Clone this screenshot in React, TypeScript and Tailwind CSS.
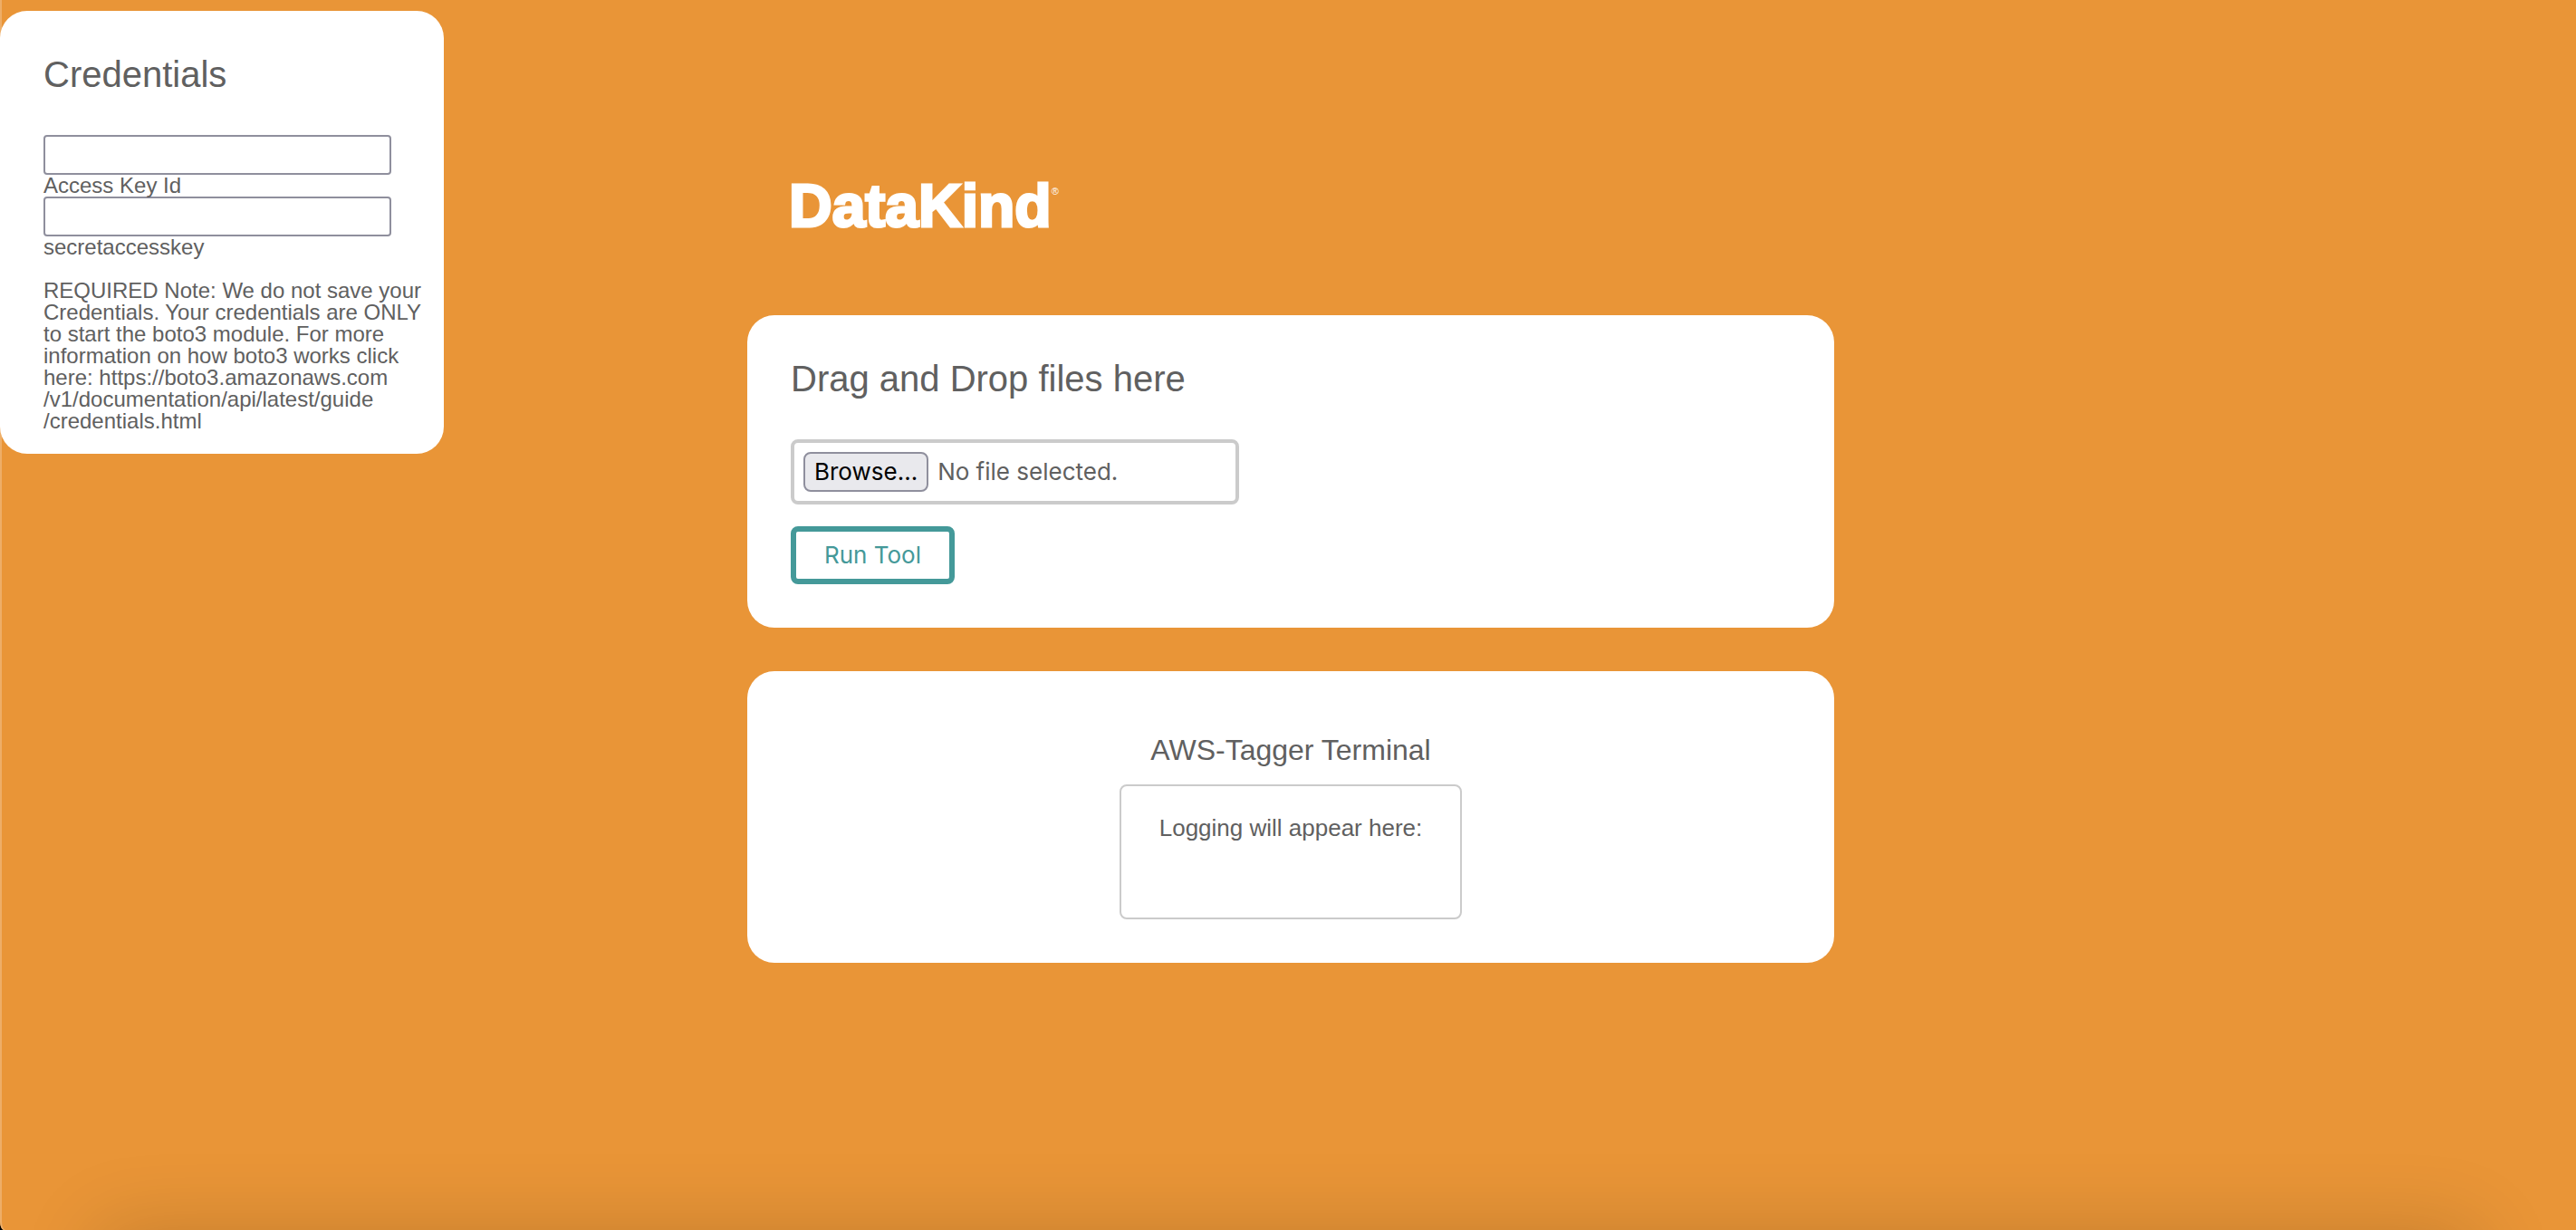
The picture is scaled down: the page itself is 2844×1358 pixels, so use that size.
import React from "react";

function Logo() {
  return (
    <div className="flex h-[348px] items-start px-[46px] pt-[187px] text-white" role="img" aria-label="DataKind">
      <span className="font-['Liberation_Sans'] text-[66px] leading-[80px] font-bold [-webkit-text-stroke:3px_white]">
        DataKind
      </span>
      <span className="pt-4 font-['Liberation_Sans'] text-[11px] leading-4">®</span>
    </div>
  );
}

function Credentials() {
  return (
    <aside className="mt-3 w-[490px] self-start rounded-[30px] bg-white pt-12 pr-6 pb-6 pl-12 text-[24px] leading-6">
      <h2 className="mb-[45px] text-[40px] leading-11">Credentials</h2>
      <form>
        <input
          id="access-key"
          type="text"
          className="block h-11 w-[384px] rounded-sm border-2 border-[#8f8f9d] bg-white px-2"
        />
        <label htmlFor="access-key" className="block">
          Access Key Id
        </label>
        <input
          id="secret-key"
          type="password"
          className="block h-11 w-[384px] rounded-sm border-2 border-[#8f8f9d] bg-white px-2"
        />
        <label htmlFor="secret-key" className="block">
          secretaccesskey
        </label>
      </form>
      <p className="mt-6 whitespace-nowrap">
        REQUIRED Note: We do not save your
        <br />
        Credentials. Your credentials are ONLY
        <br />
        to start the boto3 module. For more
        <br />
        information on how boto3 works click
        <br />
        here: https://boto3.amazonaws.com
        <br />
        /v1/documentation/api/latest/guide
        <br />
        /credentials.html
      </p>
    </aside>
  );
}

function UploadCard() {
  return (
    <section className="rounded-[30px] bg-white p-12">
      <h1 className="mb-[45px] text-[40px] leading-11">Drag and Drop files here</h1>
      <label className="flex h-[72px] w-[495px] items-center gap-[10px] rounded-lg border-4 border-[#cbcbcb] px-[10px] font-['Inter'] text-[26px] leading-8">
        <input type="file" className="sr-only" />
        <span className="flex h-[44px] items-center rounded-lg border-2 border-[#8f8f9d] bg-[#e9e9ed] px-[10px] text-black">
          Browse...
        </span>
        <span>No file selected.</span>
      </label>
      <button
        type="button"
        className="mt-6 flex h-16 w-[181px] items-center justify-center rounded-lg border-6 border-[#449999] bg-white font-['Inter'] text-[26px] leading-8 text-[#449999]"
      >
        Run Tool
      </button>
    </section>
  );
}

function TerminalCard() {
  return (
    <section className="flex flex-col items-center rounded-[30px] bg-white px-12 pt-[66px] pb-12">
      <h2 className="mb-4 text-[32px] leading-[43px]">AWS-Tagger Terminal</h2>
      <div className="h-[149px] w-[378px] rounded-lg border-2 border-[#cbcbcb] pt-[30px] text-center">
        <p className="text-[26px] leading-8">Logging will appear here:</p>
      </div>
    </section>
  );
}

export default function App() {
  return (
    <div className="min-h-screen bg-black">
      <div className="relative grid min-h-screen grid-cols-[825fr_1200px_819fr] overflow-hidden rounded-bl-[4px_10px] bg-[#e99537] font-['Liberation_Sans',sans-serif] text-[#606060] shadow-[inset_2px_0_0_#eeae67]">
        <Credentials />
        <main>
          <Logo />
          <div className="flex flex-col gap-12">
            <UploadCard />
            <TerminalCard />
          </div>
        </main>
        <div className="pointer-events-none absolute inset-x-[110px] top-full h-40 shadow-[0_0_90px_rgba(0,0,0,0.16)]" />
      </div>
    </div>
  );
}
